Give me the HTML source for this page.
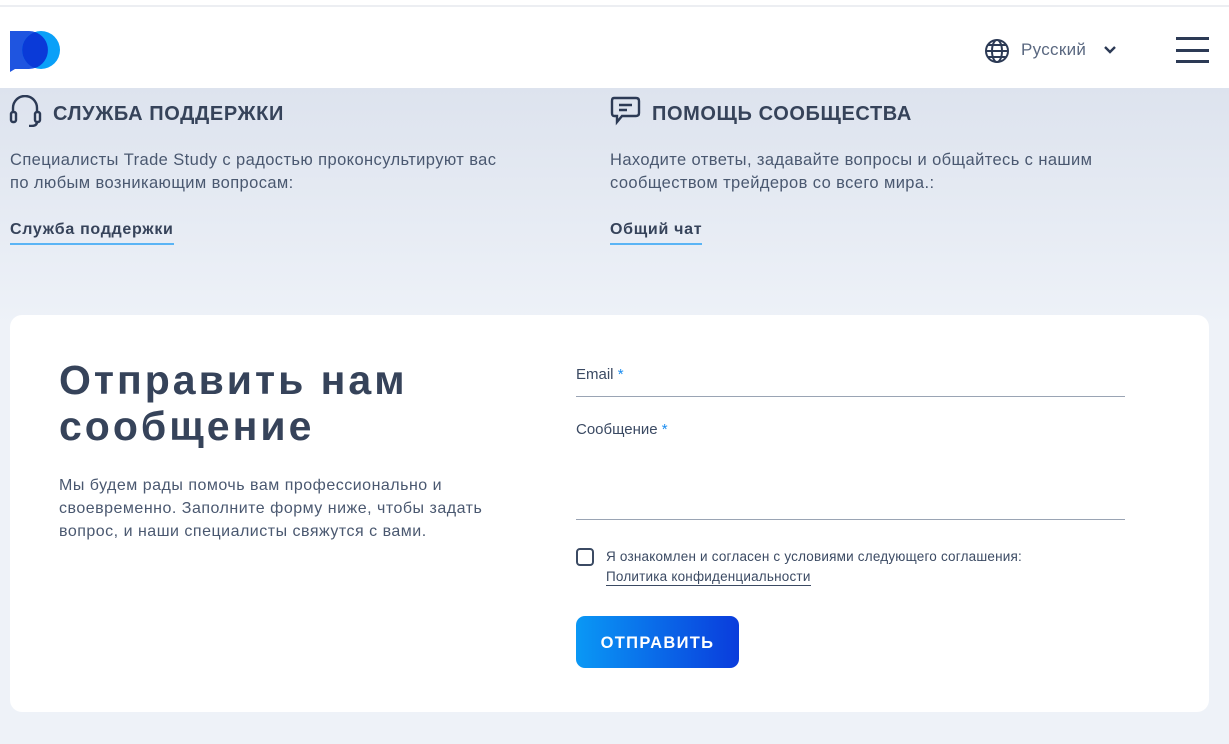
<!DOCTYPE html>
<html><head><meta charset="utf-8"><style>
*{margin:0;padding:0;box-sizing:border-box}
body{width:1229px;height:744px;overflow:hidden;font-family:"Liberation Sans","DejaVu Sans",sans-serif;background:#eef2f8;position:relative;color:#3b4a63}
.top{position:absolute;left:0;top:0;width:1229px;height:88px;background:#fff;border-top:5px solid #fff}
.top:before{content:"";position:absolute;left:0;top:0;width:100%;height:2px;background:#eceef2}
.bg{position:absolute;left:0;top:88px;width:1229px;height:656px;background:linear-gradient(#dde3ee,#eef2f8 240px)}
.abs{position:absolute}
.h{font-size:20px;font-weight:bold;color:#36435a;letter-spacing:0.6px}
.p{font-size:16.5px;line-height:23px;color:#4a5870;letter-spacing:0.4px}
.lnk{font-size:16px;font-weight:bold;color:#36435a;padding-bottom:4px;border-bottom:2px solid #5ab4f5;letter-spacing:0.7px}
.card{position:absolute;left:10px;top:315px;width:1199px;height:397px;background:#fff;border-radius:12px}
.field{position:absolute;left:576px;width:549px;border-bottom:1px solid #9aa4b4;font-size:15px;color:#3b4a63}
</style></head><body>
<div class="top"></div>
<svg class="abs" style="left:9px;top:30px" width="52" height="42" viewBox="0 0 52 42">
<path d="M1 1 H20 A19 19 0 0 1 20 39 H6 L1 42 Z" fill="#1f55e0"/>
<circle cx="32" cy="20" r="19" fill="#0aa0f8"/>
<path d="M26 2 A19 19 0 0 1 26 38 A19 19 0 0 1 26 2Z" fill="#0a3ad8"/>
</svg>
<svg class="abs" style="left:984px;top:38px" width="26" height="26" viewBox="0 0 26 26" fill="none" stroke="#2c3a55" stroke-width="2"><circle cx="13" cy="13" r="11"/><ellipse cx="13" cy="13" rx="5" ry="11"/><path d="M2 13H24M4 7H22M4 19H22"/></svg>
<div class="abs" style="left:1021px;top:40px;font-size:17px;color:#5a6880;letter-spacing:0.3px">Русский</div>
<svg class="abs" style="left:1103px;top:45px" width="14" height="10" viewBox="0 0 14 10" fill="none" stroke="#2c3a55" stroke-width="2.4"><path d="M2 2L7 7L12 2"/></svg>
<div class="abs" style="left:1176px;top:37px;width:33px;height:3px;background:#2c3a55"></div>
<div class="abs" style="left:1176px;top:49px;width:33px;height:3px;background:#2c3a55"></div>
<div class="abs" style="left:1176px;top:60px;width:33px;height:3px;background:#2c3a55"></div>
<div class="bg"></div>
<svg class="abs" style="left:9px;top:95px" width="34" height="32" viewBox="0 0 34 32" fill="none" stroke="#2c3a55" stroke-width="2.4"><path d="M4 18V13A12 12 0 0 1 28 13V18"/><rect x="2" y="17" width="5" height="10" rx="2"/><rect x="26" y="17" width="5" height="10" rx="2"/><path d="M28 27Q28 31 22 31H20"/></svg>
<div class="abs h" style="left:53px;top:103px">СЛУЖБА ПОДДЕРЖКИ</div>
<div class="abs p" style="left:10px;top:149px">Специалисты Trade Study с радостью проконсультируют вас<br>по любым возникающим вопросам:</div>
<div class="abs lnk" style="left:10px;top:221px">Служба поддержки</div>
<svg class="abs" style="left:610px;top:95px" width="32" height="32" viewBox="0 0 32 32" fill="none" stroke="#2c3a55" stroke-width="2.4"><path d="M4 3H26Q29 3 29 6V18Q29 21 26 21H12L7 27V21H4Q2 21 2 18V6Q2 3 4 3Z"/><path d="M9 10H22M9 15H17"/></svg>
<div class="abs h" style="left:652px;top:103px">ПОМОЩЬ СООБЩЕСТВА</div>
<div class="abs p" style="left:610px;top:149px">Находите ответы, задавайте вопросы и общайтесь с нашим<br>сообществом трейдеров со всего мира.:</div>
<div class="abs lnk" style="left:610px;top:221px">Общий чат</div>
<div class="card"></div>
<div class="abs" style="left:59px;top:357px;font-size:41px;line-height:46px;font-weight:bold;color:#36435a;letter-spacing:3px">Отправить нам<br>сообщение</div>
<div class="abs p" style="left:59px;top:474px;font-size:16px;letter-spacing:0.5px">Мы будем рады помочь вам профессионально и<br>своевременно. Заполните форму ниже, чтобы задать<br>вопрос, и наши специалисты свяжутся с вами.</div>
<div class="field" style="top:366px;height:31px">Email <span style="color:#1a8cf0">*</span></div>
<div class="field" style="top:421px;height:99px">Сообщение <span style="color:#1a8cf0">*</span></div>
<div class="abs" style="left:576px;top:548px;width:18px;height:18px;border:2px solid #3b4a63;border-radius:4px"></div>
<div class="abs" style="left:606px;top:547px;font-size:13.5px;line-height:20px;color:#3b4a63;letter-spacing:0.2px">Я ознакомлен и согласен с условиями следующего соглашения:<br><span style="border-bottom:1px solid #3b4a63;padding-bottom:1px">Политика конфиденциальности</span></div>
<div class="abs" style="left:576px;top:616px;width:163px;height:52px;border-radius:9px;background:linear-gradient(90deg,#0a98f5,#0a3cdc);color:#fff;font-weight:bold;font-size:16.5px;letter-spacing:1.3px;text-align:center;line-height:54px">ОТПРАВИТЬ</div>
</body></html>
